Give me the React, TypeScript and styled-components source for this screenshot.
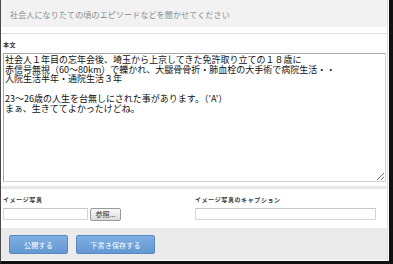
import React from "react";
import styled, { createGlobalStyle } from "styled-components";

const GlobalStyle = createGlobalStyle`
  html, body {
    margin: 0;
    padding: 0;
    background: #fff;
  }
  * {
    box-sizing: border-box;
  }
`;

const BODY_TEXT = [
  "社会人１年目の忘年会後、埼玉から上京してきた免許取り立ての１８歳に",
  "赤信号無視（60〜80km）で轢かれ、大腿骨骨折・肺血栓の大手術で病院生活・・",
  "入院生活半年・通院生活３年",
  "",
  "23〜26歳の人生を台無しにされた事があります。（'A'）",
  "まぁ、生きててよかったけどね。",
].join("\n");

export default () => {
  return (
    <>
      <GlobalStyle />
      <Frame>
        <Panel>
          <TitleBar>社会人になりたての頃のエピソードなどを聞かせてください</TitleBar>
          <Rule />
          <BodySection>
            <Label>本文</Label>
            <BodyArea defaultValue={BODY_TEXT} spellCheck={false} />
          </BodySection>
          <Separator />
          <PhotoRow>
            <Field>
              <Label>イメージ写真</Label>
              <FileRow>
                <TextInput width={85} />
                <BrowseBtn type="button">参照...</BrowseBtn>
              </FileRow>
            </Field>
            <Field>
              <Label>イメージ写真のキャプション</Label>
              <TextInput width={181} />
            </Field>
          </PhotoRow>
          <ButtonBar>
            <ActionBtn type="button" width={59}>公開する</ActionBtn>
            <ActionBtn type="button" width={79}>下書き保存する</ActionBtn>
          </ButtonBar>
        </Panel>
        <Gap />
      </Frame>
    </>
  );
};

const Frame = styled.div`
  display: flex;
  width: 393px;
  height: 264px;
  border-left: 1px solid #4a4a4a;
  border-right: 4px solid #111;
  border-bottom: 3px solid #111;
  background: #fff;
  font-family: "Noto Sans CJK JP", "Noto Sans", sans-serif;
`;

const Panel = styled.div`
  display: flex;
  flex-direction: column;
  width: 387px;
  border-right: 1px solid #dcdcdc;
  padding-bottom: 1px;
`;

const Gap = styled.div`
  width: 1px;
`;

const TitleBar = styled.div`
  height: 27px;
  display: flex;
  align-items: center;
  padding: 2px 0 0 9px;
  background: #f2f2f2;
  color: #8a8a8a;
  font-size: 8px;
  letter-spacing: 0.15px;
  white-space: nowrap;
`;

const Rule = styled.div`
  margin-top: 6px;
  border-top: 1px solid #dedede;
`;

const BodySection = styled.div`
  display: flex;
  flex-direction: column;
  padding: 7px 1px 0 2px;
`;

const Label = styled.div`
  height: 8px;
  line-height: 8px;
  margin-bottom: 4px;
  font-size: 6px;
  font-weight: 700;
  letter-spacing: 0.6px;
  color: #3a3a3a;
  white-space: nowrap;
`;

const BodyArea = styled.textarea`
  display: block;
  width: 383px;
  height: 129px;
  margin: 0;
  padding: 1px 1px 0 1px;
  border: 1px solid #a8a8a8;
  border-bottom-color: #d0d0d0;
  border-right-color: #d0d0d0;
  font-family: "Noto Sans CJK JP", "Noto Sans", sans-serif;
  font-size: 9px;
  line-height: 9.7px;
  color: #111;
  background: #fff;
  overflow: hidden;
  outline: none;
`;

const Separator = styled.div`
  margin-top: 4px;
  height: 3px;
  background: #e8e8e8;
`;

const PhotoRow = styled.div`
  display: grid;
  grid-template-columns: 192px 1fr;
  padding: 7px 0 7px 2px;
`;

const Field = styled.div`
  display: flex;
  flex-direction: column;
`;

const FileRow = styled.div`
  display: flex;
  align-items: flex-start;
  gap: 2px;
`;

const TextInput = styled.input<{ width: number }>`
  width: ${(p) => p.width}px;
  height: 12px;
  margin: 0;
  padding: 0 2px;
  border: 1px solid #d6d6d6;
  border-top-color: #c8c8c8;
  background: #fff;
  outline: none;
`;

const BrowseBtn = styled.button`
  width: 31px;
  height: 13px;
  margin: 0;
  padding: 0;
  border: 1px solid #9a9a9a;
  border-radius: 2px;
  background: linear-gradient(#f8f8f8, #dcdcdc);
  font-family: "Noto Sans CJK JP", "Noto Sans", sans-serif;
  font-size: 7px;
  line-height: 11px;
  color: #333;
`;

const ButtonBar = styled.div`
  display: flex;
  gap: 8px;
  height: 32px;
  padding: 7px 0 0 8px;
  background: #ebebeb;
`;

const ActionBtn = styled.button<{ width: number }>`
  width: ${(p) => p.width}px;
  height: 19px;
  margin: 0;
  padding: 0;
  border: 1px solid #5a89c2;
  border-radius: 2px;
  background: linear-gradient(#7eaee2, #6598d2);
  font-family: "Noto Sans CJK JP", "Noto Sans", sans-serif;
  font-size: 7px;
  letter-spacing: 0.2px;
  color: #fff;
`;
